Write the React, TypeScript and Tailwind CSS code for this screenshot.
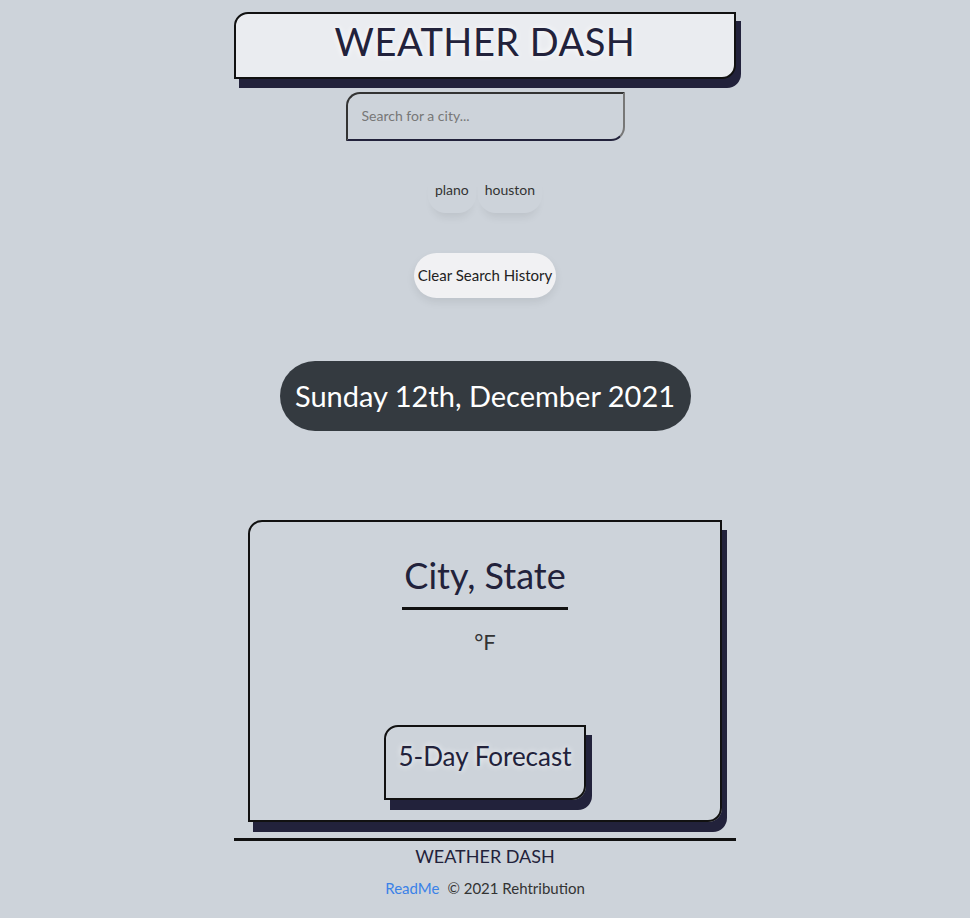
import { useState } from 'react';

const history = ['plano', 'houston'];

export default function App() {
  const [city, setCity] = useState('');

  return (
    <div
      className="min-h-[918px] bg-[#cdd3da] text-[#22223b] flex flex-col items-center"
      style={{ fontFamily: 'Lato, "Open Sans", sans-serif' }}
    >
      {/* Header */}
      <header className="mt-3 w-[502px] h-[67px] bg-[#eaecf0] border-2 border-[#111] rounded-tl-[14px] rounded-br-[14px] shadow-[5px_9px_0_#22223b] flex items-center justify-center pb-[9px]">
        <h1 className="text-[38px] leading-none tracking-[0.5px] [text-shadow:0_0_6px_#fff]">WEATHER DASH</h1>
      </header>

      {/* Search */}
      <input
        type="text"
        value={city}
        onChange={(e) => setCity(e.target.value)}
        placeholder="Search for a city..."
        className="mt-[13px] w-[279px] h-[49px] px-[14px] pb-[2px] bg-transparent border-2 border-[#333] border-r-[#777] border-b-[#22223b] rounded-tl-[14px] rounded-br-[14px] text-[14px] placeholder:text-[#777] focus:outline-none"
      />

      {/* History */}
      <div className="mt-[32px] flex gap-[2px]">
        {history.map((h) => (
          <button
            key={h}
            className="px-[7px] pt-[7px] pb-[13px] text-[14px] leading-[20px] text-[#333] rounded-b-[18px] shadow-[0_9px_8px_-5px_rgba(0,0,0,0.08)]"
          >
            {h}
          </button>
        ))}
      </div>

      <button className="mt-[40px] w-[142px] h-[45px] bg-[#f1f1f3] rounded-full text-[15px] text-[#222] shadow-[0_4px_8px_rgba(0,0,0,0.08)]">
        Clear Search History
      </button>

      {/* Date */}
      <div className="mt-[63px] w-[411px] h-[70px] bg-[#343a40] rounded-full flex items-center justify-center">
        <span className="text-white text-[29px]">Sunday 12th, December 2021</span>
      </div>

      {/* Current weather card */}
      <section className="mt-[89px] w-[474px] h-[302px] border-2 border-[#111] rounded-tl-[14px] rounded-br-[14px] shadow-[5px_10px_0_#22223b] flex flex-col items-center">
        <h2 className="mt-[30px] text-[36px] leading-[46px] pb-[9px] px-[2px] border-b-[3px] border-[#111]">City, State</h2>
        <p className="mt-[15px] text-[22px] text-[#333]">°F</p>
        <button className="mt-[67px] w-[202px] h-[75px] pb-[12px] border-2 border-[#111] rounded-tl-[14px] rounded-br-[14px] shadow-[6px_10px_0_#22223b] text-[26px] [text-shadow:0_0_6px_#fff]">
          5-Day Forecast
        </button>
      </section>

      {/* Footer */}
      <footer className="mt-[16px] w-[502px] border-t-[3px] border-[#111] flex flex-col items-center">
        <p className="mt-[2px] text-[18px] text-[#22223b]">WEATHER DASH</p>
        <p className="mt-[7px] text-[15px] text-[#333]">
          <a href="#" className="text-[#3b82e8] mr-[8px]">ReadMe</a>© 2021 Rehtribution
        </p>
      </footer>
    </div>
  );
}
